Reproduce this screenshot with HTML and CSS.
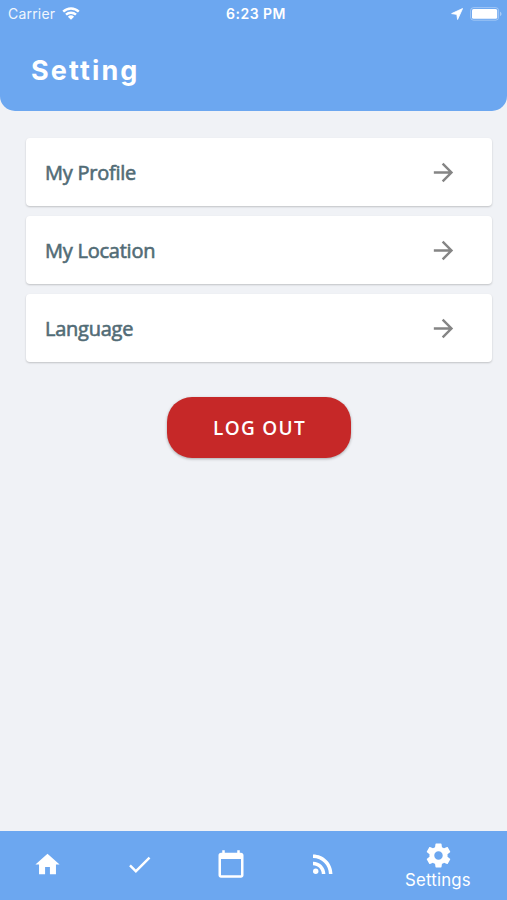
FILE: index.html
```html
<!DOCTYPE html>
<html lang="en">
<head>
<meta charset="utf-8">
<title>Setting</title>
<link rel="stylesheet" href="styles.css">
</head>
<body>
<div class="app">
  <header class="header">
    <div class="status">
      <div class="status-left">
        <span class="carrier">Carrier</span>
        <svg class="wifi" viewBox="0 0 18 13" width="18" height="13"><path d="M1.2 4.7a11.2 11.2 0 0 1 15.6 0M4 7.7a7.2 7.2 0 0 1 10 0" fill="none" stroke="#fff" stroke-width="2.4"/><path d="M9 12.8L5.9 9.8a4.5 4.5 0 0 1 6.2 0z" fill="#fff"/></svg>
      </div>
      <span class="time">6:23 PM</span>
      <div class="status-right">
        <svg class="locate" viewBox="0 0 12 12" width="12" height="12"><path d="M11.6.5L.6 5.6l5.2.8.8 5.1z" fill="#fff" stroke="#fff" stroke-width=".8" stroke-linejoin="round"/></svg>
        <svg viewBox="0 0 32 14" width="32" height="14"><rect x=".6" y=".6" width="28" height="12.6" rx="3" fill="none" stroke="#fff" stroke-opacity=".35" stroke-width="1"/><rect x="2" y="2" width="25.2" height="9.8" rx="1.6" fill="#fff"/><path d="M30 4.7c2 .7 2 3.7 0 4.4z" fill="#fff" fill-opacity=".4"/></svg>
      </div>
    </div>
    <h1 class="title">Setting</h1>
  </header>
  <main class="content">
    <div class="card"><span>My Profile</span><svg class="arrow" viewBox="0 0 24 24"><path d="M12 4l-1.41 1.41L16.17 11H4v2h12.17l-5.58 5.59L12 20l8-8z"/></svg></div>
    <div class="card"><span>My Location</span><svg class="arrow" viewBox="0 0 24 24"><path d="M12 4l-1.41 1.41L16.17 11H4v2h12.17l-5.58 5.59L12 20l8-8z"/></svg></div>
    <div class="card"><span>Language</span><svg class="arrow" viewBox="0 0 24 24"><path d="M12 4l-1.41 1.41L16.17 11H4v2h12.17l-5.58 5.59L12 20l8-8z"/></svg></div>
    <button class="logout">LOG OUT</button>
  </main>
  <nav class="tabs">
    <div class="tab"><svg class="icon" viewBox="0 0 24 24"><path d="M10 20v-6h4v6h5v-8h3L12 3 2 12h3v8z"/></svg></div>
    <div class="tab"><svg class="icon" viewBox="0 0 24 24"><path d="M9 16.17L4.83 12l-1.42 1.41L9 19 21 7l-1.41-1.41z"/></svg></div>
    <div class="tab"><svg class="icon icon-large" viewBox="0 0 24 24"><path d="M20 3h-1V1h-2v2H7V1H5v2H4c-1.1 0-2 .9-2 2v16c0 1.1.9 2 2 2h16c1.1 0 2-.9 2-2V5c0-1.1-.9-2-2-2zm0 18H4V8h16v13z"/></svg></div>
    <div class="tab"><svg class="icon icon-large" viewBox="0 0 24 24"><circle cx="6.18" cy="17.82" r="2.18"/><path d="M4 4.44v2.83c7.03 0 12.73 5.7 12.73 12.73h2.83c0-8.59-6.97-15.56-15.56-15.56zm0 5.66v2.83c3.9 0 7.07 3.17 7.07 7.07h2.83c0-5.47-4.43-9.9-9.9-9.9z"/></svg></div>
    <div class="tab tab-active"><svg class="icon" viewBox="0 0 24 24"><path d="M19.43 12.98c.04-.32.07-.64.07-.98s-.03-.66-.07-.98l2.11-1.65c.19-.15.24-.42.12-.64l-2-3.46c-.12-.22-.39-.3-.61-.22l-2.49 1c-.52-.4-1.08-.73-1.69-.98l-.38-2.65C14.46 2.18 14.25 2 14 2h-4c-.25 0-.46.18-.49.42l-.38 2.65c-.61.25-1.17.59-1.69.98l-2.49-1c-.23-.09-.49 0-.61.22l-2 3.46c-.13.22-.07.49.12.64l2.11 1.65c-.04.32-.07.65-.07.98s.03.66.07.98l-2.11 1.65c-.19.15-.24.42-.12.64l2 3.46c.12.22.39.3.61.22l2.49-1c.52.4 1.08.73 1.69.98l.38 2.65c.03.24.24.42.49.42h4c.25 0 .46-.18.49-.42l.38-2.65c.61-.25 1.17-.59 1.69-.98l2.49 1c.23.09.49 0 .61-.22l2-3.46c.12-.22.07-.49-.12-.64l-2.11-1.65zM12 15.5c-1.93 0-3.5-1.57-3.5-3.5s1.57-3.5 3.5-3.5 3.5 1.57 3.5 3.5-1.57 3.5-3.5 3.5z"/></svg><span>Settings</span></div>
  </nav>
</div>
</body>
</html>
```

FILE: styles.css
```css
* { box-sizing: border-box; }
body { margin: 0; background: #f0f2f6; font-family: Inter, sans-serif; }
.app { width: 507px; height: 900px; display: flex; flex-direction: column; }
.header { height: 111px; flex: none; background: #6ca7f0; color: #fff; border-radius: 0 0 15px 15px; }
.status { height: 27px; padding: 0 5px 0 8px; display: grid; grid-template-columns: 1fr auto 1fr; align-items: center; font-size: 14px; line-height: 27px; }
.status-left, .status-right { display: flex; align-items: center; gap: 7px; }
.status-right { justify-content: flex-end; }
.carrier { letter-spacing: 0.2px; opacity: .9; }
.time { font-weight: 600; letter-spacing: 0.5px; padding-left: 2px; }
.title { margin: 26px 0 0 31px; font-size: 27px; line-height: 36px; font-weight: 700; letter-spacing: 2.1px; }
.content { flex: 1; padding: 27px 15px 0 26px; display: flex; flex-direction: column; }
.card { height: 68px; margin-bottom: 10px; padding: 0 34px 0 19px; border-radius: 4px; background: #fff; box-shadow: 0 1px 2px rgba(0,0,0,.2); display: flex; align-items: center; justify-content: space-between; color: #526c76; font-family: "Open Sans", sans-serif; font-size: 20px; letter-spacing: -0.24px; -webkit-text-stroke: 0.6px #526c76; }
.arrow { width: 29px; height: 29px; fill: #858585; }
.logout { width: 184px; height: 61px; margin: 25px 0 0 141px; padding: 0 0 0 1px; border: 0; border-radius: 25px; background: #c62828; color: #fff; box-shadow: 0 1px 3px rgba(0,0,0,.3); font: 600 19px "Open Sans", sans-serif; letter-spacing: 1.3px; }
.tabs { height: 69px; flex: none; background: #6ca7f0; color: #fff; display: grid; grid-template-columns: repeat(4, 92px) 1fr; padding-left: 1px; }
.tab { display: flex; flex-direction: column; align-items: center; justify-content: center; padding-bottom: 3px; }
.tab-active { padding-bottom: 1px; font-size: 16.8px; line-height: 20px; letter-spacing: 0.2px; }
.icon { width: 29px; height: 29px; fill: #fff; }
.icon-large { width: 30px; height: 30px; }
```
